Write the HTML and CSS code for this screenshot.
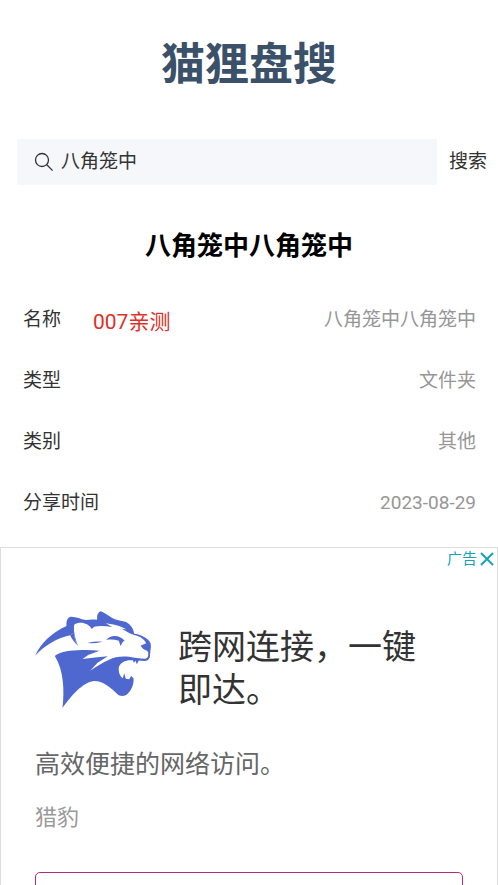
FILE: index.html
```html
<!DOCTYPE html>
<html lang="zh-CN">
<head>
<meta charset="utf-8">
<meta name="viewport" content="width=device-width, initial-scale=1">
<title>猫狸盘搜</title>
<link rel="stylesheet" href="styles.css">
</head>
<body>
<header class="brand"><h1 class="brand-name">猫狸盘搜</h1></header>
<form class="search">
  <div class="search-box">
    <svg class="search-icon" viewBox="0 0 20 20" aria-hidden="true"><circle cx="8" cy="8" r="6.5"/><path d="M12.8 12.8L18.6 18.6"/></svg>
    <input class="search-input" type="text" aria-label="搜索" value="八角笼中">
  </div>
  <button class="search-button" type="button">搜索</button>
</form>
<main>
  <h2 class="title">八角笼中八角笼中</h2>
  <dl class="details">
    <div class="row"><dt>名称</dt><dd class="note">007亲测</dd><dd class="value">八角笼中八角笼中</dd></div>
    <div class="row"><dt>类型</dt><dd class="value">文件夹</dd></div>
    <div class="row"><dt>类别</dt><dd class="value">其他</dd></div>
    <div class="row"><dt>分享时间</dt><dd class="value">2023-08-29</dd></div>
  </dl>
</main>
<aside class="ad">
  <div class="ad-bar">
    <span>广告</span>
    <button class="ad-close" type="button" aria-label="关闭"><svg viewBox="0 0 14 14" aria-hidden="true"><path d="M1 1L13 13M13 1L1 13"/></svg></button>
  </div>
  <div class="ad-head">
    <svg class="ad-logo" viewBox="45 35 350 291" aria-hidden="true">
      <path class="ink" d="M45 169C61 134 92 101 139 80C138 65 142 54 151 52C166 51 182 59 196 62C208 60 219 60 231 61C230 49 233 38 242 36C253 40 264 49 276 56C289 63 307 65 318 68C332 76 340 88 342 103C358 105 378 112 389 127C393 134 393 143 391 151L389 174C386 183 380 185 373 185L344 183C317 180 300 188 296 204C294 219 300 231 308 237L312 222L317 238L327 240L333 230L340 237C342 256 333 276 318 287C309 292 298 291 292 285C271 263 245 244 221 245C187 249 151 292 127 326C133 274 131 214 104 170C115 160 140 154 171 153L173 139C164 130 158 120 150 108C112 116 75 137 45 169Z"/>
      <path class="paper" d="M162 76C179 65 204 71 215 89L222 82C237 79 258 80 276 83L257 72C276 75 292 77 304 83L319 90L304 88C319 94 327 103 342 107C359 111 373 119 378 132L361 139C366 146 371 151 378 153L384 158L384 170C382 177 378 179 371 178L344 175C309 168 286 172 267 181C247 190 230 200 210 214L232 190L263 171C237 173 212 176 187 179L204 167L238 154C215 152 191 152 171 153L173 139C166 118 159 98 162 76Z"/>
      <path class="paper" d="M150 108L162 100C162 116 168 134 177 146L171 153C165 138 158 122 150 108Z"/>
      <path class="ink" d="M150 108L162 100C162 116 167 130 173 139C163 130 156 120 150 108Z"/>
      <path class="ink" d="M258 122C271 106 298 106 314 125L309 126L301 140L296 124C283 120 269 120 258 122ZM202 131Q222 126 247 127Q222 133 202 131ZM337 180L341 190L346 184L350 195L357 181Z"/>
    </svg>
    <p class="ad-title">跨网连接，一键即达。</p>
  </div>
  <p class="ad-text">高效便捷的网络访问。</p>
  <p class="ad-source">猎豹</p>
  <button class="ad-action" type="button" aria-label="打开"></button>
</aside>
</body>
</html>
```
FILE: styles.css
```css
* {
  box-sizing: border-box;
}

html {
  scrollbar-width: none;
}

body,
h1,
h2,
p,
dl,
dd {
  margin: 0;
}

body {
  background: #fff;
  color: #333;
  font: 19px/28px Roboto, "Noto Sans CJK SC", sans-serif;
}

button,
input {
  padding: 0;
  border: 0;
  background: none;
  color: inherit;
  font: inherit;
}

.brand {
  padding: 33px 16px 42px;
  text-align: center;
}

.brand-name {
  color: #3a5169;
  font-size: 44px;
  line-height: 64px;
}

.search {
  display: flex;
  align-items: center;
  gap: 12px;
  padding: 0 11px 0 17px;
}

.search-box {
  display: flex;
  flex: 1;
  align-items: center;
  gap: 7px;
  height: 46px;
  padding: 0 17px;
  border-radius: 2px;
  background: #f6f7fa;
}

.search-icon {
  width: 20px;
  height: 20px;
  fill: none;
  stroke: #333;
  stroke-width: 1.3;
}

.search-input {
  flex: 1;
  min-width: 0;
  outline: 0;
}

.title {
  margin-top: 43px;
  color: #000;
  font-size: 26px;
  line-height: 36px;
  text-align: center;
}

.details {
  margin-top: 25px;
  padding: 0 22px 0 23px;
}

.row {
  display: flex;
  align-items: center;
  height: 61px;
}

.note {
  margin-left: 32px;
  padding-top: 4px;
  color: #df2f27;
  font-size: 21px;
}

.value {
  margin-left: auto;
  color: #969696;
}

.ad {
  margin-top: 14px;
  padding: 0 34px 32px;
  border: 1px solid #ddd;
}

.ad-bar {
  display: flex;
  align-items: center;
  justify-content: flex-end;
  gap: 3px;
  height: 22px;
  margin-right: -31px;
  color: #16a3b8;
  font-size: 15px;
  line-height: 22px;
}

.ad-close {
  display: flex;
  width: 14px;
  height: 14px;
}

.ad-close svg {
  width: 14px;
  height: 14px;
  fill: none;
  stroke: currentColor;
  stroke-width: 2;
}

.ad-head {
  display: flex;
  align-items: flex-start;
  gap: 26px;
  margin-top: 41px;
}

.ad-logo {
  flex: none;
  width: 117px;
  height: 97px;
}

.ad-logo .ink {
  fill: #4f68cf;
}

.ad-logo .paper {
  fill: #fff;
}

.ad-title {
  max-width: 250px;
  padding-top: 15px;
  font-size: 34px;
  line-height: 43px;
}

.ad-text {
  margin-top: 35px;
  color: #666;
  font-size: 25px;
  line-height: 36px;
}

.ad-source {
  margin-top: 19px;
  color: #999;
  font-size: 22px;
  line-height: 32px;
}

.ad-action {
  display: block;
  width: 100%;
  height: 60px;
  margin-top: 38px;
  border: 1px solid #b02a83;
  border-radius: 5px;
}
```
